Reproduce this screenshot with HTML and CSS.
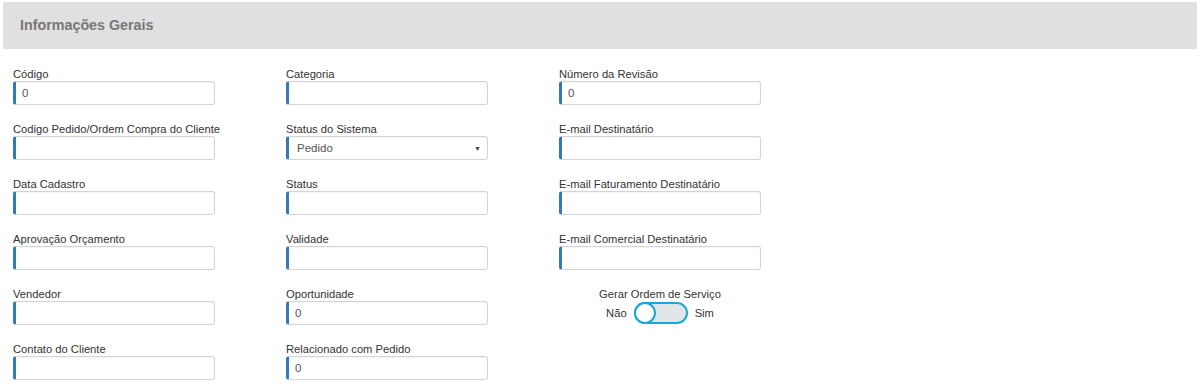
FILE: index.html
```html
<!DOCTYPE html>
<html lang="pt-BR">
<head>
  <meta charset="UTF-8" />
  <title>Informações Gerais</title>
  <link rel="stylesheet" href="styles.css">
</head>
<body>
  <div class="panel">
    <div class="panel-heading">Informações Gerais</div>
    <div class="form-grid">
      <div class="field"><label>Código</label><input type="text" value="0"></div>
      <div class="field"><label>Categoria</label><input type="text"></div>
      <div class="field"><label>Número da Revisão</label><input type="text" value="0"></div>

      <div class="field"><label>Codigo Pedido/Ordem Compra do Cliente</label><input type="text"></div>
      <div class="field"><label>Status do Sistema</label>
        <div class="select">Pedido<span class="caret">▼</span></div>
      </div>
      <div class="field"><label>E-mail Destinatário</label><input type="text"></div>

      <div class="field"><label>Data Cadastro</label><input type="text"></div>
      <div class="field"><label>Status</label><input type="text"></div>
      <div class="field"><label>E-mail Faturamento Destinatário</label><input type="text"></div>

      <div class="field"><label>Aprovação Orçamento</label><input type="text"></div>
      <div class="field"><label>Validade</label><input type="text"></div>
      <div class="field"><label>E-mail Comercial Destinatário</label><input type="text"></div>

      <div class="field"><label>Vendedor</label><input type="text"></div>
      <div class="field"><label>Oportunidade</label><input type="text" value="0"></div>
      <div class="field toggle-field">
        <label>Gerar Ordem de Serviço</label>
        <div class="toggle-row">
          <span>Não</span>
          <span class="switch"><span class="knob"></span></span>
          <span>Sim</span>
        </div>
      </div>

      <div class="field"><label>Contato do Cliente</label><input type="text"></div>
      <div class="field"><label>Relacionado com Pedido</label><input type="text" value="0"></div>
    </div>
  </div>
</body>
</html>
```

FILE: styles.css
```css
:root {
  --heading-bg: #e0e0e0;
  --heading-text: #777;
  --text: #333;
  --input-text: #555;
  --border: #d4d4d4;
  --accent: #337ab7;
  --toggle: #1aa7d8;
}
body {
  margin: 0;
  padding: 2px 3px;
  font-family: "Liberation Sans", Arial, sans-serif;
  font-size: 11.2px;
  color: var(--text);
  background: #fff;
}
.panel-heading {
  background: var(--heading-bg);
  height: 47px;
  line-height: 47px;
  padding-left: 17px;
  font-size: 14.3px;
  font-weight: bold;
  color: var(--heading-text);
}
.form-grid {
  display: grid;
  grid-template-columns: repeat(3, 202px);
  column-gap: 71px;
  row-gap: 16px;
  padding: 17px 10px 0;
}
.field label {
  display: block;
  height: 15px;
  line-height: 17px;
  white-space: nowrap;
}
.field input,
.select {
  box-sizing: border-box;
  display: block;
  width: 202px;
  height: 24px;
  margin: 0;
  padding: 0 6px;
  border: 1px solid var(--border);
  border-left: 3px solid var(--accent);
  border-radius: 3px;
  font-family: inherit;
  font-size: 11.5px;
  color: var(--input-text);
  background: #fff;
  box-shadow: inset 0 1px 1px rgba(0, 0, 0, 0.04);
}
.select {
  display: flex;
  align-items: center;
  justify-content: space-between;
  padding: 0 6px 0 8px;
}
.caret {
  font-size: 7px;
  color: #444;
}
.toggle-field {
  text-align: center;
}
.toggle-row {
  display: flex;
  justify-content: center;
  align-items: center;
  gap: 7px;
  margin-top: 1px;
}
.switch {
  box-sizing: border-box;
  display: inline-block;
  position: relative;
  width: 54px;
  height: 22px;
  border: 2px solid var(--toggle);
  border-radius: 11px;
  background: #dfe5e9;
}
.knob {
  box-sizing: border-box;
  position: absolute;
  left: -2px;
  top: -2px;
  width: 22px;
  height: 22px;
  border: 2px solid var(--toggle);
  border-radius: 50%;
  background: #fff;
}
```
